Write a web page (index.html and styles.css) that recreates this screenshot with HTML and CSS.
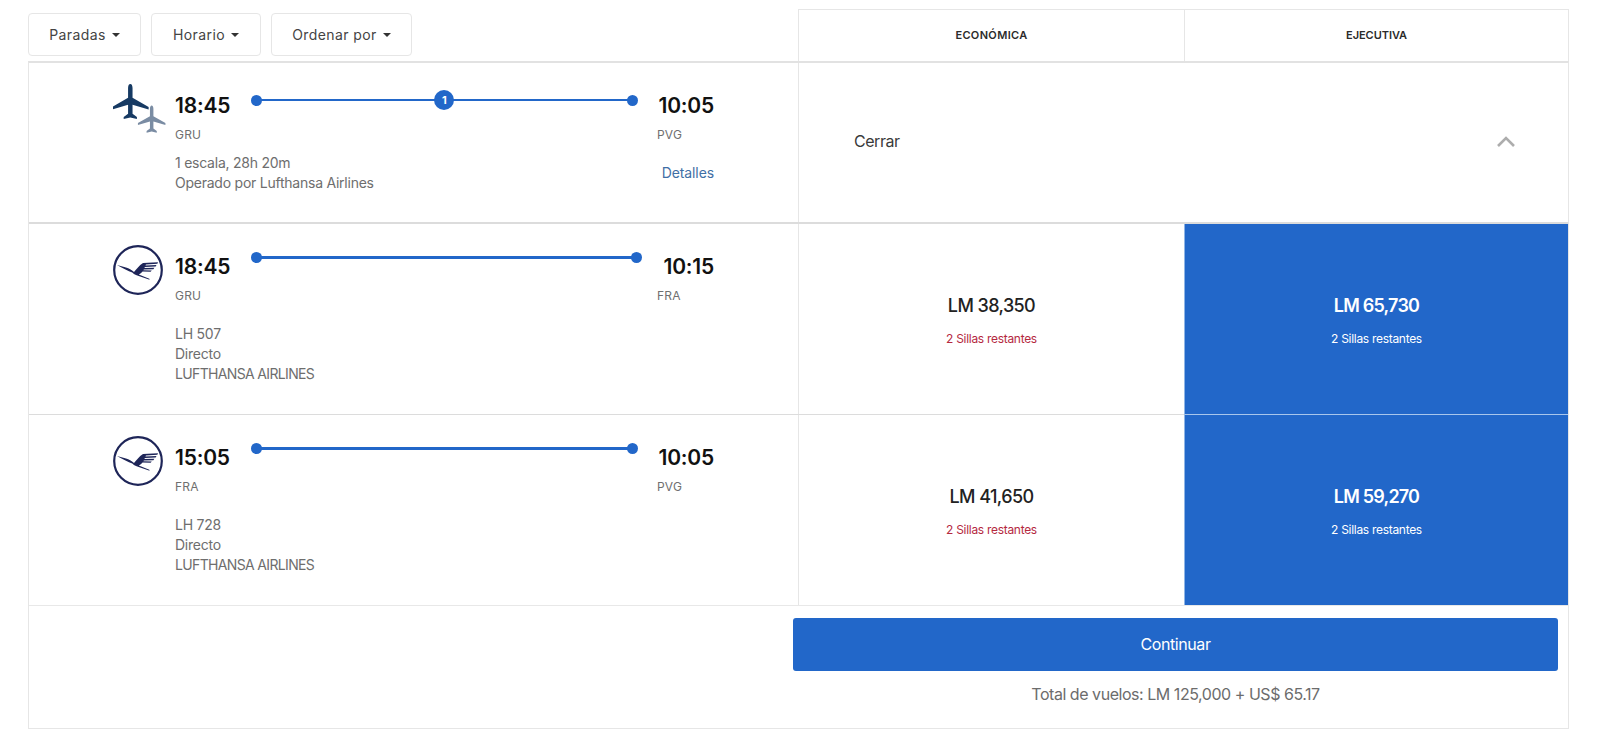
FILE: index.html
```html
<!DOCTYPE html>
<html lang="es">
<head>
<meta charset="utf-8">
<title>Vuelos</title>
<link rel="stylesheet" href="styles.css">
</head>
<body>
<main class="page">
  <header class="top">
    <div class="filters">
      <button class="filter">Paradas<span class="caret"></span></button>
      <button class="filter filter-mid">Horario<span class="caret"></span></button>
      <button class="filter filter-wide">Ordenar por<span class="caret"></span></button>
    </div>
    <div class="cabin">ECONÓMICA</div>
    <div class="cabin cabin-last">EJECUTIVA</div>
  </header>

  <section class="panel">
    <div class="row row-summary">
      <div class="flight">
        <div class="logo">
          <svg class="planes" width="57" height="57" viewBox="0 0 56 56">
            <path fill="#163a63" d="M17 0c1.400 0 2.200 1.600 2.200 4v9.500L35 22.500v2.600l-15.800-4.600v8.800l4.300 3.200v2l-6.500-1.600-6.500 1.600v-2l4.300-3.200v-8.800L-.8 25.100v-2.600l15.600-9V4c0-2.400.8-4 2.200-4z"/>
            <path fill="#7a8ca3" d="M38 21c1 0 1.700 1.300 1.700 3.200v7.400l11.800 6.600v2.100l-11.800-3.400v6.800l3.300 2.500v1.600L38 46.600l-5 1.200v-1.600l3.300-2.500v-6.800l-11.800 3.400v-2.100l11.800-6.600v-7.400c0-1.900.7-3.200 1.700-3.200z"/>
          </svg>
        </div>
        <div class="body">
          <div class="line">
            <span class="time">18:45</span>
            <div class="track track-thin"><span class="stop">1</span></div>
            <span class="time">10:05</span>
          </div>
          <div class="codes"><span>GRU</span><span class="code-end">PVG</span></div>
          <div class="meta-row">
            <div class="meta meta-tight">1 escala, 28h 20m<br>Operado por Lufthansa Airlines</div>
            <a class="details">Detalles</a>
          </div>
        </div>
      </div>
      <div class="close">
        <span>Cerrar</span>
        <svg width="20" height="14" viewBox="0 0 20 14"><path d="M2 12l8-8 8 8" fill="none" stroke="#adadad" stroke-width="2.600"/></svg>
      </div>
    </div>

    <div class="row row-leg">
      <div class="flight">
        <div class="logo">
          <svg class="crane" width="50" height="50" viewBox="0 0 50 50">
            <circle cx="25" cy="25" r="23.800" fill="#fff" stroke="#1e2558" stroke-width="2.200"/>
            <path fill="#1e2558" d="M4 20l9 2.500c3 1 5.500 2.400 8 4.600 2.500-2.600 5-6.500 9-9l15-.8-.6 1.500-11.500.8-.4.8 11-.3-.8 1.500-10.800.4-.5.9 10-.1-1 1.400-9.500.2-.6.9 8.500.1-1.200 1.300-8-.1c-1.200 1.300-2.300 2.300-3.800 3l10.500 4.200.3 1-13-4.500c-1.500-.3-3-1.500-4.300-2.700C15 26 10.500 23.500 4 20z"/>
          </svg>
        </div>
        <div class="body">
          <div class="line">
            <span class="time">18:45</span>
            <div class="track"></div>
            <span class="time">10:15</span>
          </div>
          <div class="codes"><span>GRU</span><span class="code-end">FRA</span></div>
          <div class="meta">LH 507<br>Directo<br><span class="carrier">LUFTHANSA AIRLINES</span></div>
        </div>
      </div>
      <div class="fare">
        <div class="price">LM 38,350</div>
        <div class="seats">2 Sillas restantes</div>
      </div>
      <div class="fare fare-selected">
        <div class="price">LM 65,730</div>
        <div class="seats">2 Sillas restantes</div>
      </div>
    </div>

    <div class="row row-leg row-leg-last">
      <div class="flight">
        <div class="logo">
          <svg class="crane" width="50" height="50" viewBox="0 0 50 50">
            <circle cx="25" cy="25" r="23.800" fill="#fff" stroke="#1e2558" stroke-width="2.200"/>
            <path fill="#1e2558" d="M4 20l9 2.500c3 1 5.500 2.400 8 4.600 2.500-2.600 5-6.500 9-9l15-.8-.6 1.500-11.500.8-.4.8 11-.3-.8 1.500-10.800.4-.5.9 10-.1-1 1.400-9.500.2-.6.9 8.500.1-1.200 1.300-8-.1c-1.200 1.300-2.300 2.300-3.800 3l10.500 4.200.3 1-13-4.500c-1.500-.3-3-1.500-4.300-2.700C15 26 10.500 23.500 4 20z"/>
          </svg>
        </div>
        <div class="body">
          <div class="line">
            <span class="time">15:05</span>
            <div class="track"></div>
            <span class="time">10:05</span>
          </div>
          <div class="codes"><span>FRA</span><span class="code-end">PVG</span></div>
          <div class="meta">LH 728<br>Directo<br><span class="carrier">LUFTHANSA AIRLINES</span></div>
        </div>
      </div>
      <div class="fare">
        <div class="price">LM 41,650</div>
        <div class="seats">2 Sillas restantes</div>
      </div>
      <div class="fare fare-selected">
        <div class="price">LM 59,270</div>
        <div class="seats">2 Sillas restantes</div>
      </div>
    </div>

    <footer class="footer">
      <button class="continue">Continuar</button>
      <p class="total">Total de vuelos: LM 125,000 + US$ 65.17</p>
    </footer>
  </section>
</main>
</body>
</html>
```
FILE: styles.css
```css
* { box-sizing: border-box; }
html, body { margin: 0; background: #fff; }
body { font-family: Inter, "Liberation Sans", sans-serif; color: #333; overflow: hidden; }
.page { width: 1541px; height: 748px; margin-left: 28px; padding-top: 9px; }

.top { display: grid; grid-template-columns: 770px 386px 385px; height: 52px; }
.filters { display: flex; gap: 10px; padding-top: 4px; }
.filter {
  display: flex; align-items: center; justify-content: center; gap: 6px;
  width: 113px; height: 43px; padding: 0;
  background: #fff; border: 1px solid #e6e6e6; border-radius: 4px;
  font: 400 14px Inter, "Liberation Sans", sans-serif; letter-spacing: .4px; color: #444;
}
.filter-mid { width: 110px; }
.filter-wide { width: 141px; }
.caret { width: 0; height: 0; border: 4px solid transparent; border-top-color: #333; border-bottom-width: 0; }
.cabin {
  display: flex; align-items: center; justify-content: center; padding-bottom: 1px;
  border: 1px solid #e6e6e6; border-right: 0; border-bottom: 0;
  font-size: 11px; font-weight: 600; letter-spacing: .35px; color: #2b2b2b;
}
.cabin-last { border-right: 1px solid #e6e6e6; padding-bottom: 2px; letter-spacing: -.05px; }

.panel { height: 668px; border: 1px solid #e6e6e6; border-top: 2px solid #e2e2e2; }
.row { display: grid; grid-template-columns: 769px 386px 384px; border-bottom: 1px solid #dcdcdc; }
.row-summary { height: 161px; grid-template-columns: 769px 770px; border-bottom-width: 2px; }
.row-leg { height: 191px; }
.row-leg-last { border-bottom-color: #e8e8e8; }

.flight { display: flex; padding: 15px 84px 0 84px; }
.row-leg .flight { padding-top: 19px; }
.logo { width: 62px; flex: none; }
.planes { display: block; margin-top: 6px; }
.crane { display: block; margin-top: 2px; }
.body { flex: 1; min-width: 0; padding-top: 13px; }
.row-leg .body { padding-top: 9px; }
.line { display: flex; align-items: flex-start; gap: 26px; }
.time { font-size: 21px; line-height: 30px; font-weight: 600; color: #111; letter-spacing: -.2px; }
.track { flex: 1; height: 3px; margin-top: 4px; background: #2267c9; position: relative; }
.track-thin { height: 2px; margin-top: 8px; }
.track::before, .track::after {
  content: ""; position: absolute; top: 50%; width: 11px; height: 11px; margin-top: -5.500px;
  border-radius: 50%; background: #2267c9;
}
.track::before { left: -5px; }
.track::after { right: -5px; }
.stop {
  position: absolute; left: 50%; top: 50%; width: 20px; height: 20px; margin: -10px 0 0 -10px;
  border-radius: 50%; background: #2267c9; color: #fff;
  font-size: 11px; font-weight: 700; line-height: 20px; text-align: center;
}
.codes { display: flex; font-size: 12px; line-height: 16px; color: #6f6f6f; margin-top: 6px; letter-spacing: .2px; }
.code-end { margin-left: auto; width: 57px; }
.meta { font-size: 14px; line-height: 20px; color: #6e6e6e; margin-top: 20px; letter-spacing: -.24px; }
.meta-tight { margin-top: 10px; }
.carrier { letter-spacing: -.65px; }
.meta-row { display: flex; justify-content: space-between; align-items: flex-end; }
.details { font-size: 14px; line-height: 20px; color: #3f6fa5; margin-bottom: 10px; letter-spacing: -.1px; }

.close { display: flex; align-items: center; justify-content: space-between; padding: 0 52px 3px 55px; font-size: 16px; letter-spacing: -.45px; color: #3a3a3a; border-left: 1px solid #e6e6e6; }
.fare { display: flex; flex-direction: column; align-items: center; padding-top: 69px; border-left: 1px solid #e6e6e6; }
.price { font-size: 18px; line-height: 26px; font-weight: 500; letter-spacing: -.6px; color: #222; }
.seats { font-size: 12px; line-height: 16px; margin-top: 12px; letter-spacing: -.3px; color: #b5293f; }
.fare-selected { background: #2267c9; border-left-color: #8fb5e6; margin-bottom: -1px; }
.fare-selected .price { color: #fff; font-weight: 600; letter-spacing: -.8px; }
.fare-selected .seats { color: #fff; }
.row-leg .fare-selected { border-bottom: 1px solid #a9c6ec; }
.row-leg-last .fare-selected { border-bottom: 0; margin-bottom: 0; }

.footer { display: flex; flex-direction: column; align-items: center; width: 765px; margin-left: 764px; padding-top: 12px; }
.continue {
  width: 100%; height: 53px; padding: 0 0 2px; border: 0; border-radius: 3px; background: #2267c9; color: #fff;
  font: 400 16px Inter, "Liberation Sans", sans-serif; letter-spacing: -.4px;
}
.total { margin: 12px 0 0; font-size: 16px; line-height: 22px; color: #6c6c6c; letter-spacing: -.46px; }
```
